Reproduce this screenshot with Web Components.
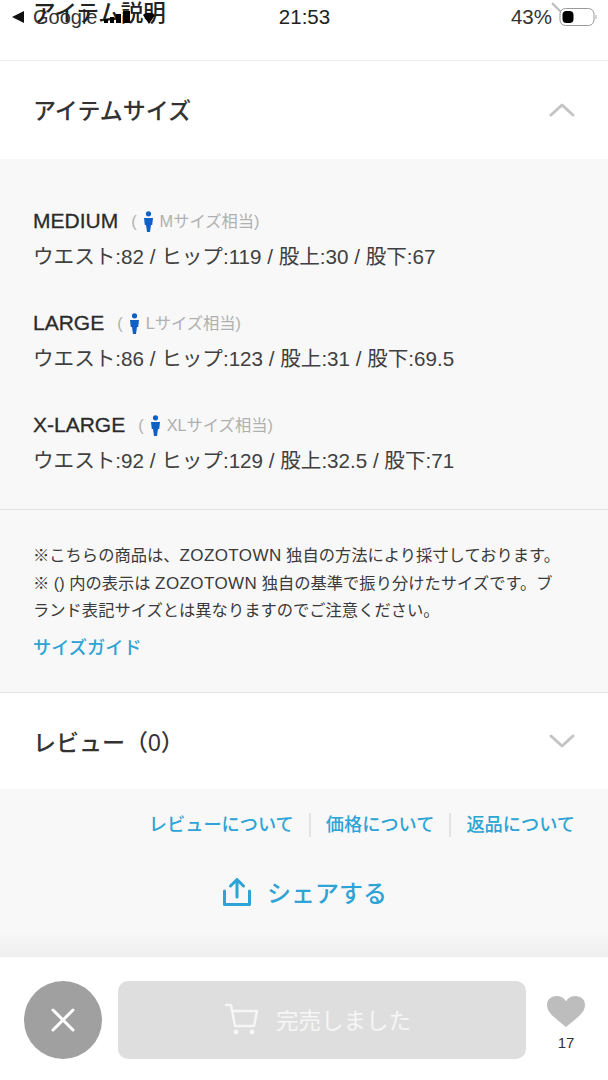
<!DOCTYPE html>
<html lang="ja">
<head>
<meta charset="utf-8">
<title>アイテムサイズ</title>
<style>
  html, body { margin: 0; background: #fff; }
  body {
    width: 608px;
    height: 1080px;
    overflow: hidden;
    font-family: "Liberation Sans", "Noto Sans CJK JP", sans-serif;
    color: #333;
  }
</style>
</head>
<body>
  <status-bar></status-bar>
  <accordion-head open>アイテムサイズ</accordion-head>
  <size-list>
    <size-row name="MEDIUM" fit="Mサイズ相当" dims="ウエスト:82 / ヒップ:119 / 股上:30 / 股下:67"></size-row>
    <size-row name="LARGE" fit="Lサイズ相当" dims="ウエスト:86 / ヒップ:123 / 股上:31 / 股下:69.5"></size-row>
    <size-row name="X-LARGE" fit="XLサイズ相当" dims="ウエスト:92 / ヒップ:129 / 股上:32.5 / 股下:71"></size-row>
  </size-list>
  <size-note></size-note>
  <accordion-head>レビュー（0）</accordion-head>
  <page-links></page-links>
  <buy-bar></buy-bar>

<script>
const cjk = '"Liberation Sans", "Noto Sans CJK JP", sans-serif';

class StatusBar extends HTMLElement {
  constructor() {
    super();
    this.attachShadow({ mode: 'open' });
    this.shadowRoot.innerHTML = `
      <style>
        :host {
          display: block;
          position: relative;
          height: 60px;
          border-bottom: 1px solid #eee;
          font-family: ${cjk};
          color: #222;
        }
        .bar {
          display: grid;
          grid-template-columns: 1fr auto 1fr;
          align-items: center;
          height: 34px;
          padding: 0 11px 0 12px;
          font-size: 20.5px;
        }
        .left, .right { display: flex; align-items: center; }
        .left { font-size: 20px; gap: 9px; color: #333; }
        .right { justify-content: flex-end; gap: 7px; color: #333; }
        .title {
          position: absolute;
          left: 33px;
          top: -1px;
          font-size: 22.5px;
          line-height: 30px;
          font-weight: 500;
          color: #222;
        }
        .signal { position: absolute; left: 103px; top: 11px; }
        .arrow { width: 0; height: 0; border: 6px solid transparent; border-right: 12px solid #111; border-left: 0; }
      </style>
      <div class="bar">
        <div class="left"><span class="arrow"></span><span>Google</span></div>
        <div class="time">21:53</div>
        <div class="right">
          <span>43%</span>
          <svg width="38" height="20" viewBox="0 0 38 20" style="overflow:visible">
            <path d="M-7 -4l10 10" stroke="#bbb" stroke-width="2" fill="none"/>
            <rect x="1" y="1.500" width="34" height="17" rx="5.500" fill="#fff" stroke="#999"/>
            <rect x="3.500" y="4" width="11" height="12" rx="4" fill="#000"/>
            <rect x="36.500" y="8" width="1" height="4" fill="#aaa"/>
          </svg>
        </div>
      </div>
      <div class="title">アイテム説明</div>
      <svg class="signal" width="56" height="14" viewBox="0 0 56 14">
        <rect x="1" y="8" width="4" height="4" fill="#000"/>
        <rect x="7" y="6" width="4" height="6" fill="#000"/>
        <rect x="13" y="3" width="5" height="9" fill="#000"/>
        <rect x="20" y="0" width="7" height="12" fill="#000"/>
        <path d="M40 4c3-3 9-3 12 0l-6 9z" fill="#000"/>
      </svg>
    `;
  }
}

class AccordionHead extends HTMLElement {
  constructor() {
    super();
    this.attachShadow({ mode: 'open' });
    this.shadowRoot.innerHTML = `
      <style>
        :host {
          display: flex;
          align-items: center;
          justify-content: space-between;
          height: 96px;
          padding: 0 33px;
          background: #fff;
          font-family: ${cjk};
          font-size: 23px;
          font-weight: 500;
          color: #333;
        }
        :host([open]) { height: 98px; padding-bottom: 2px; box-sizing: border-box; }
        svg { display: block; }
        :host([open]) svg { transform: rotate(180deg); }
      </style>
      <slot></slot>
      <svg width="26" height="15" viewBox="0 0 26 15">
        <path d="M2 2l11 10L24 2" fill="none" stroke="#c4c4c4" stroke-width="3" stroke-linecap="round" stroke-linejoin="round"/>
      </svg>
    `;
  }
}

class SizeList extends HTMLElement {
  constructor() {
    super();
    this.attachShadow({ mode: 'open' });
    this.shadowRoot.innerHTML = `
      <style>
        :host {
          display: flex;
          flex-direction: column;
          gap: 30px;
          padding: 44px 33px 30px;
          background: #f8f8f8;
        }
      </style>
      <slot></slot>
    `;
  }
}

class SizeRow extends HTMLElement {
  constructor() {
    super();
    this.attachShadow({ mode: 'open' });
    this.shadowRoot.innerHTML = `
      <style>
        :host { display: block; font-family: ${cjk}; line-height: 36px; color: #404040; }
        .head { display: flex; align-items: center; height: 36px; }
        .name { font-size: 21px; font-weight: 500; color: #2b2b2b; -webkit-text-stroke: 0.3px #2b2b2b; }
        .fit { display: flex; align-items: center; margin-left: 13px; font-size: 16.300px; color: #b0b0b0; }
        svg { display: block; margin: 0 6px 0 6px; }
        .dims { font-size: 20.600px; }
      </style>
      <div class="head">
        <span class="name"></span>
        <span class="fit">(
          <svg width="11" height="21" viewBox="0 0 11 21">
            <circle cx="5.500" cy="2.800" r="2.600" fill="#0f5fc4"/>
            <path d="M1 7h9l-.8 7H8l-1 7H4l-1-7H1.800z" fill="#0f5fc4"/>
          </svg>
          <span class="label"></span>)
        </span>
      </div>
      <div class="dims"></div>
    `;
  }
  connectedCallback() {
    this.shadowRoot.querySelector('.name').textContent = this.getAttribute('name');
    this.shadowRoot.querySelector('.label').textContent = this.getAttribute('fit');
    this.shadowRoot.querySelector('.dims').textContent = this.getAttribute('dims');
  }
}

class SizeNote extends HTMLElement {
  constructor() {
    super();
    this.attachShadow({ mode: 'open' });
    this.shadowRoot.innerHTML = `
      <style>
        :host {
          display: block;
          padding: 32px 33px 30px;
          background: #f8f8f8;
          border-top: 1px solid #e4e4e4;
          border-bottom: 1px solid #e4e4e4;
          font-family: ${cjk};
          font-size: 16.300px;
          line-height: 27.500px;
          color: #3a3a3a;
        }
        .latin { font-size: 17px; letter-spacing: 0.4px; }
        a {
          display: block;
          margin-top: 10px;
          font-size: 18.200px;
          font-weight: 500;
          color: #2ea3d5;
          text-decoration: none;
        }
      </style>
      <div>※こちらの商品は、<span class="latin">ZOZOTOWN</span> 独自の方法により採寸しております。<br>
      ※ () 内の表示は <span class="latin">ZOZOTOWN</span> 独自の基準で振り分けたサイズです。ブ<br>
      ランド表記サイズとは異なりますのでご注意ください。</div>
      <a href="#">サイズガイド</a>
    `;
  }
}

class PageLinks extends HTMLElement {
  constructor() {
    super();
    this.attachShadow({ mode: 'open' });
    this.shadowRoot.innerHTML = `
      <style>
        :host {
          display: block;
          height: 168px;
          box-sizing: border-box;
          padding-top: 24px;
          background: linear-gradient(#f8f8f8 84%, #eee);
          font-family: ${cjk};
          color: #2ea3d5;
        }
        .links {
          display: flex;
          justify-content: flex-end;
          padding-right: 33px;
          font-size: 18.200px;
          font-weight: 500;
          line-height: 24px;
        }
        .links a { color: inherit; text-decoration: none; padding: 0 15px; border-left: 2px solid #e3e3e3; }
        .links a:first-child { border-left: 0; }
        .links a:last-child { padding-right: 0; }
        .share {
          display: flex;
          align-items: center;
          justify-content: center;
          gap: 16px;
          margin-top: 37px;
          padding-left: 2px;
          font-size: 24px;
          font-weight: 500;
        }
      </style>
      <div class="links">
        <a href="#">レビューについて</a>
        <a href="#">価格について</a>
        <a href="#">返品について</a>
      </div>
      <div class="share">
        <svg width="28" height="28" viewBox="0 0 28 28">
          <path d="M1.500 13v13.500h25V13M14 19V2M7.500 8L14 1.500 20.500 8" fill="none" stroke="#2ea3d5" stroke-width="3" stroke-linejoin="round" stroke-linecap="round"/>
        </svg>
        <span>シェアする</span>
      </div>
    `;
  }
}

class BuyBar extends HTMLElement {
  constructor() {
    super();
    this.attachShadow({ mode: 'open' });
    this.shadowRoot.innerHTML = `
      <style>
        :host {
          display: flex;
          align-items: flex-start;
          gap: 16px;
          height: 123px;
          box-sizing: border-box;
          padding: 24px 0 0 24px;
          background: #fff;
          font-family: ${cjk};
        }
        .close {
          flex: none;
          display: grid;
          place-items: center;
          width: 78px;
          height: 78px;
          border-radius: 50%;
          background: #a0a0a0;
        }
        .soldout {
          flex: none;
          display: flex;
          align-items: center;
          justify-content: center;
          gap: 17px;
          width: 408px;
          height: 78px;
          box-sizing: border-box;
          padding: 0 8px 2px 0;
          border-radius: 10px;
          background: #dedede;
          color: #f6f6f6;
          font-size: 22.500px;
        }
        .like {
          flex: none;
          display: flex;
          flex-direction: column;
          align-items: center;
          margin-left: 5px;
          padding-top: 15px;
          width: 38px;
          font-size: 15px;
          color: #333;
        }
        .like span { margin-top: 6px; }
      </style>
      <div class="close">
        <svg width="26" height="26" viewBox="0 0 26 26">
          <path d="M3 3l20 20M23 3L3 23" stroke="#fff" stroke-width="3" stroke-linecap="round" fill="none"/>
        </svg>
      </div>
      <div class="soldout">
        <svg width="34" height="32" viewBox="0 0 34 32">
          <path d="M1 2h5l4 21h19l3-15H8" fill="none" stroke="#f6f6f6" stroke-width="2.400" stroke-linejoin="round" stroke-linecap="round"/>
          <circle cx="11" cy="29" r="2.400" fill="#f6f6f6"/>
          <circle cx="27" cy="29" r="2.400" fill="#f6f6f6"/>
        </svg>
        <span>完売しました</span>
      </div>
      <div class="like">
        <svg width="38" height="32" viewBox="0 0 38 34" preserveAspectRatio="none">
          <path d="M19 33C9 24 0 18 0 9.500C0 4 4 0 9.500 0C13.500 0 17 2 19 5.500C21 2 24.500 0 28.500 0C34 0 38 4 38 9.500C38 18 29 24 19 33Z" fill="#bdbdbd"/>
        </svg>
        <span>17</span>
      </div>
    `;
  }
}

customElements.define('status-bar', StatusBar);
customElements.define('accordion-head', AccordionHead);
customElements.define('size-list', SizeList);
customElements.define('size-row', SizeRow);
customElements.define('size-note', SizeNote);
customElements.define('page-links', PageLinks);
customElements.define('buy-bar', BuyBar);
</script>
</body>
</html>
